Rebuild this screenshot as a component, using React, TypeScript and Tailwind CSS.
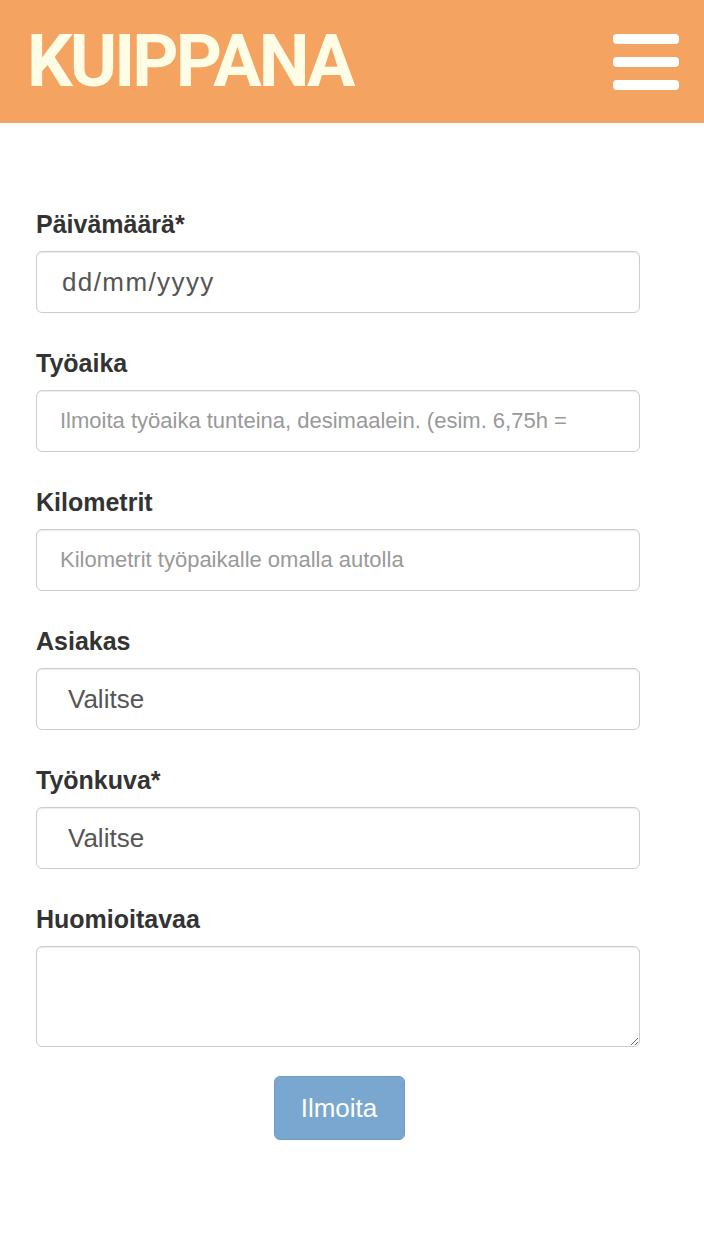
const sans = { fontFamily: "'Liberation Sans', Arial, sans-serif" };

function Label({ text }: { text: string }) {
  return (
    <label className="block text-[25px] leading-[30px] font-bold text-[#333] mb-[12px]">
      {text}
    </label>
  );
}

const boxClass =
  "block w-full h-[62px] border border-[#ccc] rounded-[6px] bg-white shadow-[inset_0_1px_1px_rgba(0,0,0,0.075)] outline-none";

function App() {
  return (
    <div className="min-h-screen bg-white" style={sans}>
      <header className="h-[123px] bg-[#f4a460] flex items-center justify-between pl-[27px] pr-[25px]">
        <h1
          className="text-[72px] font-bold text-[#fffde6] tracking-[-3px] leading-none"
          style={{ fontFamily: "Roboto, 'Liberation Sans', sans-serif" }}
        >
          KUIPPANA
        </h1>
        <div className="flex flex-col gap-[13px] w-[66px]">
          <span className="block h-[10px] rounded-[4px] bg-white" />
          <span className="block h-[10px] rounded-[4px] bg-white" />
          <span className="block h-[10px] rounded-[4px] bg-white" />
        </div>
      </header>

      <form className="pt-[86px] pl-[36px] pr-[64px]">
        <div className="mb-[35px]">
          <Label text="Päivämäärä*" />
          <input
            readOnly
            value="dd/mm/yyyy"
            className={boxClass + " pl-[25px] text-[26px] tracking-[1.4px] text-[#555]"}
          />
        </div>
        <div className="mb-[35px]">
          <Label text="Työaika" />
          <input
            placeholder="Ilmoita työaika tunteina, desimaalein. (esim. 6,75h ="
            className={boxClass + " pl-[23px] text-[22px] text-[#555] placeholder:text-[#999]"}
          />
        </div>
        <div className="mb-[35px]">
          <Label text="Kilometrit" />
          <input
            placeholder="Kilometrit työpaikalle omalla autolla"
            className={boxClass + " pl-[23px] text-[22px] text-[#555] placeholder:text-[#999]"}
          />
        </div>
        <div className="mb-[35px]">
          <Label text="Asiakas" />
          <select className={boxClass + " appearance-none pl-[31px] text-[26px] text-[#555]"}>
            <option>Valitse</option>
          </select>
        </div>
        <div className="mb-[35px]">
          <Label text="Työnkuva*" />
          <select className={boxClass + " appearance-none pl-[31px] text-[26px] text-[#555]"}>
            <option>Valitse</option>
          </select>
        </div>
        <div className="mb-[29px]">
          <Label text="Huomioitavaa" />
          <textarea className="block w-full h-[101px] border border-[#ccc] rounded-[6px] bg-white shadow-[inset_0_1px_1px_rgba(0,0,0,0.075)] outline-none" />
        </div>
        <div className="flex justify-center pl-[2px]">
          <button
            type="button"
            className="w-[131px] h-[64px] rounded-[6px] bg-[#7aa7cf] border border-[#6f9cc6] text-white text-[26px]"
          >
            Ilmoita
          </button>
        </div>
      </form>
    </div>
  );
}

export default App;
